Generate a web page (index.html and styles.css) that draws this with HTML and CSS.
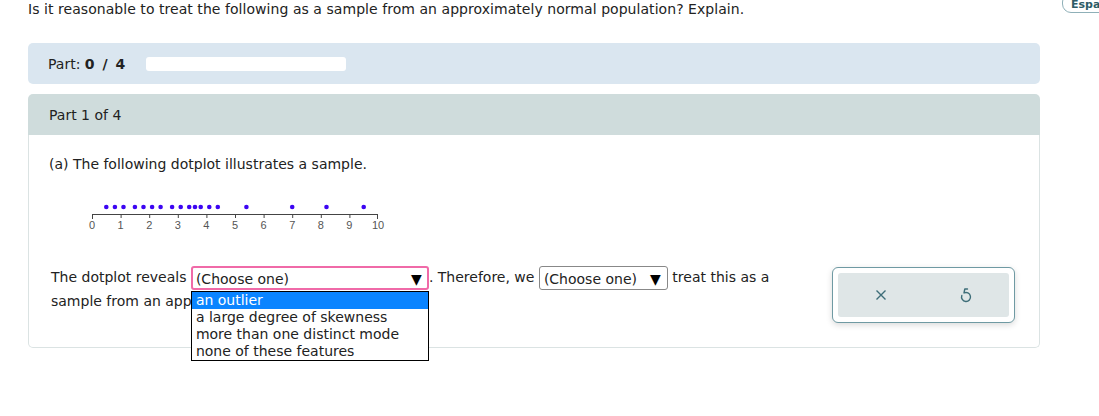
FILE: index.html
```html
<!DOCTYPE html>
<html lang="en">
<head>
  <meta charset="UTF-8">
  <title>Normal population check</title>
  <link rel="stylesheet" href="styles.css">
</head>
<body>
  <div class="top-row">
    <p class="question">Is it reasonable to treat the following as a sample from an approximately normal population? Explain.</p>
    <button class="lang-btn">Español</button>
  </div>

  <div class="page">
    <div class="part-bar">
      <span>Part: <b>0 / 4</b></span>
      <div class="progress"></div>
    </div>

    <div class="card">
      <div class="card-head">Part 1 of 4</div>
      <div class="card-body">
        <p class="prompt">(a) The following dotplot illustrates a sample.</p>

        <svg class="dotplot" width="300" height="36" viewBox="0 0 300 36">
          <g fill="#3c05f2">
            <circle cx="21.3" cy="9" r="2.3"/>
            <circle cx="29.9" cy="9" r="2.3"/>
            <circle cx="38.5" cy="9" r="2.3"/>
            <circle cx="49.9" cy="9" r="2.3"/>
            <circle cx="58.5" cy="9" r="2.3"/>
            <circle cx="67.1" cy="9" r="2.3"/>
            <circle cx="75.6" cy="9" r="2.3"/>
            <circle cx="87.1" cy="9" r="2.3"/>
            <circle cx="95.7" cy="9" r="2.3"/>
            <circle cx="104.2" cy="9" r="2.3"/>
            <circle cx="110.0" cy="9" r="2.3"/>
            <circle cx="115.7" cy="9" r="2.3"/>
            <circle cx="124.3" cy="9" r="2.3"/>
            <circle cx="132.8" cy="9" r="2.3"/>
            <circle cx="161.4" cy="9" r="2.3"/>
            <circle cx="207.2" cy="9" r="2.3"/>
            <circle cx="241.5" cy="9" r="2.3"/>
            <circle cx="278.7" cy="9" r="2.3"/>
          </g>
          <g stroke="#444" stroke-width="1">
            <line x1="7" y1="16.5" x2="293" y2="16.5"/>
            <line x1="7.5" y1="16" x2="7.5" y2="21"/>
            <line x1="36.1" y1="16" x2="36.1" y2="20"/>
            <line x1="64.7" y1="16" x2="64.7" y2="20"/>
            <line x1="93.3" y1="16" x2="93.3" y2="20"/>
            <line x1="121.9" y1="16" x2="121.9" y2="20"/>
            <line x1="150.5" y1="16" x2="150.5" y2="20"/>
            <line x1="179.1" y1="16" x2="179.1" y2="20"/>
            <line x1="207.7" y1="16" x2="207.7" y2="20"/>
            <line x1="236.3" y1="16" x2="236.3" y2="20"/>
            <line x1="264.9" y1="16" x2="264.9" y2="20"/>
            <line x1="292.5" y1="16" x2="292.5" y2="21"/>
          </g>
          <g class="ticks" text-anchor="middle">
            <text x="7" y="31">0</text>
            <text x="35.6" y="31">1</text>
            <text x="64.2" y="31">2</text>
            <text x="92.8" y="31">3</text>
            <text x="121.4" y="31">4</text>
            <text x="150" y="31">5</text>
            <text x="178.6" y="31">6</text>
            <text x="207.2" y="31">7</text>
            <text x="235.8" y="31">8</text>
            <text x="264.4" y="31">9</text>
            <text x="293" y="31">10</text>
          </g>
        </svg>

        <div class="answer-row">
          <p class="answer-text">
            The dotplot reveals
            <span class="select-wrap">
              <span class="select active"><span>(Choose one)</span><span class="arrow">▼</span></span>
              <span class="options">
                <span class="option selected">an outlier</span>
                <span class="option">a large degree of skewness</span>
                <span class="option">more than one distinct mode</span>
                <span class="option">none of these features</span>
              </span>
            </span>. Therefore, we
            <span class="select small"><span>(Choose one)</span><span class="arrow">▼</span></span>
            treat this as a sample from an approximately normal population.
          </p>

          <div class="actions">
            <div class="actions-inner">
              <button class="icon-btn" aria-label="Clear">
                <svg width="14" height="14" viewBox="0 0 14 14"><path d="M2.5 2.5 L11.5 11.5 M11.5 2.5 L2.5 11.5" stroke="#3d6d78" stroke-width="1.4" fill="none"/></svg>
              </button>
              <button class="icon-btn" aria-label="Undo">
                <svg width="12" height="18" viewBox="0 0 12 18"><path d="M7.5 3 H4.8 L4 7 A4.47 4.47 0 1 1 1.8 9.5" stroke="#3d6d78" stroke-width="1.4" fill="none" stroke-linecap="round" stroke-linejoin="round"/></svg>
              </button>
            </div>
          </div>
        </div>
      </div>
    </div>
  </div>
</body>
</html>
```

FILE: styles.css
```css
body {
  margin: 0;
  min-height: 416px;
  font-family: 'DejaVu Sans', Verdana, sans-serif;
  font-size: 14px;
  color: #222;
  background: #fff;
  overflow: hidden;
}

.top-row {
  display: flex;
  align-items: flex-start;
  padding-left: 28px;
  height: 30px;
}

.question {
  margin: 1px 0 0;
  line-height: 17px;
  letter-spacing: 0.05px;
}

.lang-btn {
  margin-left: auto;
  margin-top: -7px;
  margin-right: -40px;
  width: 77px;
  height: 20px;
  padding: 2px 0 0 8px;
  text-align: left;
  border: 1px solid #8fb0b8;
  border-radius: 9px;
  background: #fff;
  color: #2d5c67;
  font-family: inherit;
  font-size: 11px;
  font-weight: bold;
}

.page {
  width: 1012px;
  margin-left: 28px;
  margin-top: 13px;
}

.part-bar {
  display: flex;
  align-items: center;
  gap: 21px;
  height: 41px;
  padding: 0 20px;
  background: #dae6f0;
  border-radius: 5px;
}

.part-bar b {
  word-spacing: 3px;
}

.progress {
  width: 200px;
  height: 14px;
  background: #fff;
  border-radius: 3px;
}

.card {
  margin-top: 10px;
}

.card-head {
  height: 41px;
  line-height: 43px;
  padding-left: 21px;
  background: #cfdcdc;
  border-radius: 5px 5px 0 0;
}

.card-body {
  border: 1px solid #dbe3e3;
  border-top: none;
  border-radius: 0 0 5px 5px;
  padding: 21px 20px 24px 20px;
}

.prompt {
  margin: 0;
  line-height: 17px;
}

.dotplot {
  display: block;
  margin: 25px 0 0 36px;
}

.ticks text {
  font-family: 'Liberation Sans', Arial, sans-serif;
  font-size: 11px;
  fill: #555;
}

.answer-row {
  display: flex;
  align-items: flex-start;
  margin-top: 32px;
}

.answer-text {
  width: 760px;
  margin: 0 0 0 2px;
  line-height: 23px;
}

.select-wrap {
  position: relative;
  display: inline-block;
}

.select {
  display: inline-flex;
  justify-content: space-between;
  align-items: center;
  box-sizing: border-box;
  height: 24px;
  padding: 2px 6px 0 4px;
  border: 1px solid #888;
  border-radius: 3px;
  vertical-align: middle;
  line-height: 18px;
  font-size: 14px;
}

.select.active {
  width: 238px;
  border: 2px solid #f06aa8;
  padding-left: 3px;
  padding-right: 5px;
}

.select.small {
  width: 129px;
  gap: 8px;
}

.arrow {
  font-size: 14px;
  color: #000;
}

.options {
  position: absolute;
  left: 0;
  top: 25px;
  width: 238px;
  box-sizing: border-box;
  border: 1px solid #000;
  background: #fff;
  display: flex;
  flex-direction: column;
  z-index: 2;
}

.option {
  line-height: 17px;
  padding-left: 4px;
  white-space: nowrap;
}

.option.selected {
  background: #0a84ff;
  color: #fff;
}

.actions {
  margin-left: 21px;
  margin-top: 1px;
  width: 183px;
  box-sizing: border-box;
  padding: 5px;
  border: 1px solid #6f9aa3;
  border-radius: 6px;
  box-shadow: 0 2px 6px rgba(0, 0, 0, 0.15);
  background: #fff;
}

.actions-inner {
  display: flex;
  height: 44px;
  background: #dfe6e7;
  border-radius: 3px;
}

.icon-btn {
  flex: 1;
  display: flex;
  align-items: center;
  justify-content: center;
  background: none;
  border: none;
  padding: 0;
}
```
